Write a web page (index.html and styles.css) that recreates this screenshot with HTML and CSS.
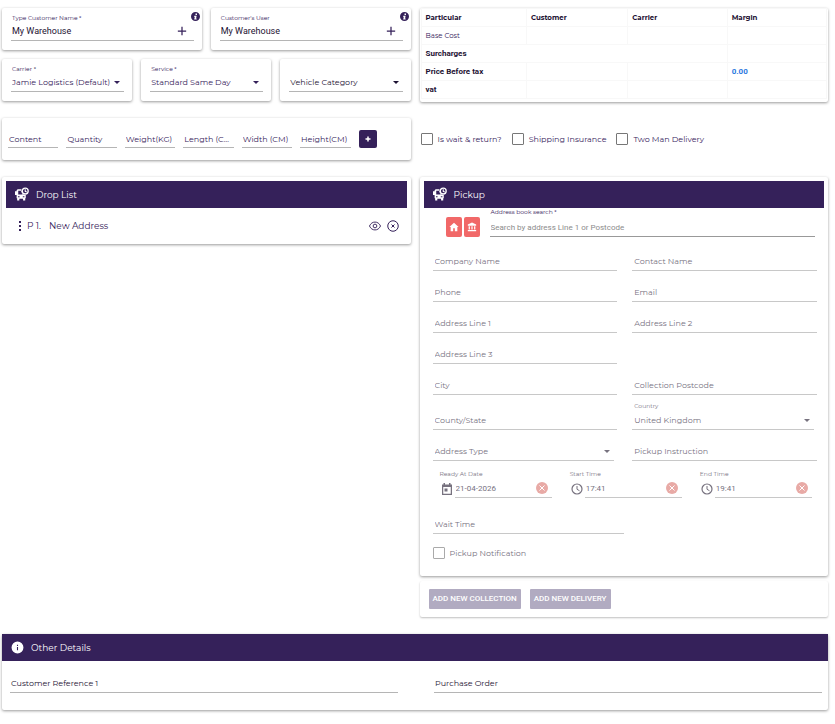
FILE: index.html
```html
<!DOCTYPE html>
<html lang="en">
<head>
    <meta charset="UTF-8">
    <meta name="viewport" content="width=device-width, initial-scale=1.0">
    <title>New Booking</title>
    <link rel="stylesheet" href="styles.css">
</head>
<body>
    <!-- shared icons -->
    <svg class="sprite" aria-hidden="true">
        <symbol id="icon-info" viewBox="0 0 24 24">
            <path fill="currentColor" fill-rule="evenodd" d="M12 0a12 12 0 1 0 0 24 12 12 0 0 0 0-24zM12 4h4v4h-4zM9 10h6l-1.500 7H15v3H8.500L10 13H8.500z"/>
        </symbol>
        <symbol id="icon-info-thin" viewBox="0 0 24 24">
            <path fill="currentColor" fill-rule="evenodd" d="M12 1a11 11 0 1 0 0 22 11 11 0 0 0 0-22zM11 7h2v2h-2zM11 11h2v6h-2z"/>
        </symbol>
        <symbol id="icon-plus" viewBox="0 0 24 24">
            <path fill="currentColor" d="M10.500 2h3v8.500H22v3h-8.500V22h-3v-8.500H2v-3h8.500z"/>
        </symbol>
        <symbol id="icon-plus-bold" viewBox="0 0 24 24">
            <path fill="currentColor" d="M9 2h6v7h7v6h-7v7H9v-7H2V9h7z"/>
        </symbol>
        <symbol id="icon-bus" viewBox="0 0 26 26">
            <path fill="currentColor" fill-rule="evenodd" d="M5 4h7a8 8 0 0 0 8 11v6h-1v4h-4v-3H8v3H4v-4H3v-6H0V8h3V6zM6 7v7h8V7zM5.500 17v2h3v-2zM14.500 17v2h3v-2z"/>
            <circle cx="19" cy="7.500" r="5.500" fill="none" stroke="currentColor" stroke-width="2.400"/>
            <path d="M19 4v4l3 1.500" fill="none" stroke="currentColor" stroke-width="2"/>
        </symbol>
        <symbol id="icon-clock" viewBox="0 0 24 24">
            <circle cx="12" cy="12" r="10" fill="none" stroke="currentColor" stroke-width="2.400"/>
            <path d="M12 6v6.500l5 3" fill="none" stroke="currentColor" stroke-width="2"/>
        </symbol>
        <symbol id="icon-cancel" viewBox="0 0 24 24">
            <circle cx="12" cy="12" r="12" fill="#e8aaa6"/>
            <path d="M7 7l10 10M17 7L7 17" stroke="#fff" stroke-width="2"/>
        </symbol>
    </svg>

    <main class="page">
        <div class="columns">
            <section class="filters">
                <div class="filter-row">
                    <div class="card filter">
                        <label for="customer-name">Type Customer Name *</label>
                        <div class="control">
                            <input class="roboto" type="text" id="customer-name" value="My Warehouse">
                            <button class="icon-button" aria-label="Add customer"><svg class="plus"><use href="#icon-plus"/></svg></button>
                        </div>
                        <svg class="info"><use href="#icon-info"/></svg>
                    </div>
                    <div class="card filter">
                        <label for="customer-user">Customer's User</label>
                        <div class="control">
                            <input class="roboto" type="text" id="customer-user" value="My Warehouse">
                            <button class="icon-button" aria-label="Add user"><svg class="plus"><use href="#icon-plus"/></svg></button>
                        </div>
                        <svg class="info"><use href="#icon-info"/></svg>
                    </div>
                </div>
                <div class="filter-row">
                    <div class="card filter">
                        <label for="carrier">Carrier *</label>
                        <div class="control select">
                            <select id="carrier"><option>Jamie Logistics (Default)</option></select>
                        </div>
                    </div>
                    <div class="card filter">
                        <label for="service">Service *</label>
                        <div class="control select">
                            <select id="service"><option>Standard Same Day</option></select>
                        </div>
                    </div>
                    <div class="card filter">
                        <div class="control select dark">
                            <select aria-label="Vehicle Category"><option>Vehicle Category</option></select>
                        </div>
                    </div>
                </div>
            </section>

            <section class="card prices">
                <table>
                    <thead>
                        <tr><th>Particular</th><th>Customer</th><th>Carrier</th><th>Margin</th></tr>
                    </thead>
                    <tbody>
                        <tr><td>Base Cost</td><td></td><td></td><td></td></tr>
                        <tr><th class="roboto" colspan="3">Surcharges</th><td></td></tr>
                        <tr><th class="roboto">Price Before tax</th><td></td><td></td><td class="roboto amount">0.00</td></tr>
                        <tr><th class="roboto">vat</th><td></td><td></td><td></td></tr>
                    </tbody>
                </table>
            </section>

            <section class="card parcel">
                <input type="text" aria-label="Content" placeholder="Content">
                <input type="text" aria-label="Quantity" placeholder="Quantity">
                <input type="text" aria-label="Weight(KG)" placeholder="Weight(KG)">
                <input type="text" aria-label="Length (CM)" placeholder="Length (CM)">
                <input type="text" aria-label="Width (CM)" placeholder="Width (CM)">
                <input type="text" aria-label="Height(CM)" placeholder="Height(CM)">
                <button class="add" aria-label="Add parcel"><svg><use href="#icon-plus-bold"/></svg></button>
            </section>

            <section class="options">
                <label><input type="checkbox"> Is wait &amp; return?</label>
                <label><input type="checkbox"> Shipping Insurance</label>
                <label><input type="checkbox"> Two Man Delivery</label>
            </section>

            <section class="card drops">
                <h2 class="bar"><svg class="bus"><use href="#icon-bus"/></svg>Drop List</h2>
                <div class="drop">
                    <svg class="grip" viewBox="0 0 2 10"><path d="M0 0h2v2H0zM0 4h2v2H0zM0 8h2v2H0z" fill="currentColor"/></svg>
                    <span>P 1.</span>
                    <span class="drop-name">New Address</span>
                    <button class="icon-button" aria-label="View">
                        <svg class="eye" viewBox="0 0 26 20" fill="none" stroke="currentColor" stroke-width="2"><path d="M1 10C4 4 8 1.500 13 1.500S22 4 25 10c-3 6-7 8.500-12 8.500S4 16 1 10z"/><circle cx="13" cy="10" r="4"/></svg>
                    </button>
                    <button class="icon-button" aria-label="Remove">
                        <svg class="remove" viewBox="0 0 24 24" fill="none" stroke="currentColor" stroke-width="2"><circle cx="12" cy="12" r="10.500"/><path d="M9 9l6 6M15 9l-6 6"/></svg>
                    </button>
                </div>
            </section>

            <div class="stop">
                <form class="card pickup">
                    <h2 class="bar"><svg class="bus"><use href="#icon-bus"/></svg>Pickup</h2>
                    <div class="search">
                        <button type="button" class="book" aria-label="Home address">
                            <svg viewBox="0 0 24 24"><path fill="currentColor" d="M12 2L1 12h3v10h6v-7h4v7h6V12h3z"/></svg>
                        </button>
                        <button type="button" class="book" aria-label="Business address">
                            <svg viewBox="0 0 24 24"><path fill="currentColor" d="M12 1L2 6v3h20V6zM4 10h3v8H4zM10.500 10h3v8h-3zM17 10h3v8h-3zM2 19h20v3H2z"/></svg>
                        </button>
                        <div class="search-field">
                            <label for="search">Address book search *</label>
                            <input class="roboto" type="text" id="search" placeholder="Search by address Line 1 or Postcode">
                        </div>
                    </div>
                    <div class="fields">
                        <input type="text" aria-label="Company Name" placeholder="Company Name">
                        <input type="text" aria-label="Contact Name" placeholder="Contact Name">
                        <input type="text" aria-label="Phone" placeholder="Phone">
                        <input type="text" aria-label="Email" placeholder="Email">
                        <input type="text" aria-label="Address Line 1" placeholder="Address Line 1">
                        <input type="text" aria-label="Address Line 2" placeholder="Address Line 2">
                        <input type="text" aria-label="Address Line 3" placeholder="Address Line 3">
                        <input class="first" type="text" aria-label="City" placeholder="City">
                        <input type="text" aria-label="Collection Postcode" placeholder="Collection Postcode">
                        <input type="text" aria-label="County/State" placeholder="County/State">
                        <div class="country">
                            <label for="country">Country</label>
                            <div class="control select">
                                <select id="country"><option>United Kingdom</option></select>
                            </div>
                        </div>
                        <div class="control select">
                            <select aria-label="Address Type"><option>Address Type</option></select>
                        </div>
                        <input type="text" aria-label="Pickup Instruction" placeholder="Pickup Instruction">
                    </div>
                    <div class="times">
                        <div class="time">
                            <label for="ready">Ready At Date</label>
                            <svg viewBox="0 0 24 24"><path fill="currentColor" fill-rule="evenodd" d="M5 0h3v3h8V0h3v3h3v21H2V3h3zM4.500 8v13.500h15V8zM7 11h6v6H7z"/></svg>
                            <div class="control">
                                <input class="roboto" type="text" id="ready" value="21-04-2026">
                                <button type="button" class="icon-button" aria-label="Clear date"><svg><use href="#icon-cancel"/></svg></button>
                            </div>
                        </div>
                        <div class="time">
                            <label for="start">Start Time</label>
                            <svg><use href="#icon-clock"/></svg>
                            <div class="control">
                                <input class="roboto" type="text" id="start" value="17:41">
                                <button type="button" class="icon-button" aria-label="Clear start time"><svg><use href="#icon-cancel"/></svg></button>
                            </div>
                        </div>
                        <div class="time">
                            <label for="end">End Time</label>
                            <svg><use href="#icon-clock"/></svg>
                            <div class="control">
                                <input class="roboto" type="text" id="end" value="19:41">
                                <button type="button" class="icon-button" aria-label="Clear end time"><svg><use href="#icon-cancel"/></svg></button>
                            </div>
                        </div>
                    </div>
                    <div class="wait">
                        <input type="text" aria-label="Wait Time" placeholder="Wait Time">
                    </div>
                    <label class="notify"><input type="checkbox"> Pickup Notification</label>
                </form>
                <div class="card actions">
                    <button>ADD NEW COLLECTION</button>
                    <button>ADD NEW DELIVERY</button>
                </div>
            </div>
        </div>

        <section class="card other">
            <h2 class="bar"><svg class="details"><use href="#icon-info-thin"/></svg>Other Details</h2>
            <div class="references">
                <input type="text" aria-label="Customer Reference 1" placeholder="Customer Reference 1">
                <input type="text" aria-label="Purchase Order" placeholder="Purchase Order">
            </div>
        </section>
    </main>
</body>
</html>
```

FILE: styles.css
```css
* {
    box-sizing: border-box;
}
body {
    margin: 0;
    background-color: #fff;
    color: #35215a;
    font-family: Montserrat, Inter, sans-serif;
    font-size: 8px;
    line-height: 12px;
}
.sprite {
    display: none;
}
svg {
    display: block;
}
input, select, button {
    min-width: 0;
    margin: 0;
    padding: 0;
    border: 0;
    background: none;
    color: inherit;
    font: inherit;
}
input[type="text"], select {
    width: 100%;
    height: 18px;
    outline: none;
}
input::placeholder {
    color: inherit;
    opacity: 1;
}
input:placeholder-shown {
    text-overflow: ellipsis;
}
select {
    appearance: none;
}
button {
    cursor: pointer;
}
.roboto {
    font-family: Roboto, sans-serif;
}
.page {
    padding: 8px 7px 12px 2px;
}
.columns {
    display: grid;
    grid-template-columns: 1fr 1fr;
    gap: 16px 9px;
    align-items: start;
}
.card {
    background-color: #fff;
    border-radius: 2px;
    box-shadow: 0 1px 3px rgba(0, 0, 0, 0.4);
}

/* underlined controls */
.control {
    display: flex;
    align-items: center;
    border-bottom: 1px solid #b5b5b5;
}
.select {
    display: grid;
}
.select select, .select::after {
    grid-area: 1 / 1;
}
.select::after {
    content: "";
    justify-self: end;
    margin-right: 4px;
    border: 3px solid transparent;
    border-top-color: currentColor;
    border-bottom: 0;
    pointer-events: none;
}
.icon-button {
    flex: none;
}

/* customer, carrier and service */
.filters {
    display: grid;
    gap: 9px;
}
.filter-row {
    display: grid;
    grid-auto-flow: column;
    grid-auto-columns: 1fr;
    gap: 9px;
}
.filter {
    position: relative;
    display: flex;
    flex-direction: column;
    justify-content: flex-end;
    height: 42px;
    padding: 0 8px 9px 9px;
}
.filter label, .search label, .country label, .time label {
    padding-left: 1px;
    font-size: 6px;
    line-height: 8px;
}
.filter input, .filter select {
    padding-left: 1px;
}
.filter .roboto {
    color: #1d1233;
    font-size: 9px;
}
.filter .dark {
    color: #1d1233;
}
.plus {
    width: 10px;
    height: 10px;
    margin-right: 7px;
}
.info {
    position: absolute;
    top: 4px;
    right: 2px;
    width: 9px;
    height: 9px;
}

/* price table */
.prices {
    height: 94px;
    padding: 0 1px;
}
table {
    width: 100%;
    table-layout: fixed;
    border-collapse: collapse;
    font-size: 7px;
}
th, td {
    height: 18px;
    padding: 0 4px;
    border: 1px solid #f8f8f8;
    text-align: left;
}
th {
    color: #1d1233;
    font-weight: 700;
}
th:first-child {
    width: 26%;
}
th:nth-child(2) {
    width: 25%;
}
table .roboto {
    font-size: 8px;
}
.amount {
    color: #2b78e0;
    font-weight: 700;
}

/* parcel line */
.parcel {
    display: flex;
    align-items: flex-end;
    gap: 8px;
    height: 42px;
    padding: 0 34px 12px 6px;
}
.parcel input {
    flex: 1;
    padding-left: 1px;
    border-bottom: 1px solid #b5b5b5;
}
.add {
    display: grid;
    place-items: center;
    width: 18px;
    height: 18px;
    border-radius: 2px;
    background-color: #35215a;
    color: #fff;
}
.add svg {
    width: 6px;
    height: 6px;
}

/* check boxes */
.options {
    display: flex;
    align-items: center;
    gap: 10px;
    height: 42px;
    margin-bottom: 1px;
    padding-left: 1px;
}
.options label, .notify {
    display: flex;
    align-items: center;
    gap: 5px;
}
input[type="checkbox"] {
    appearance: none;
    width: 12px;
    height: 12px;
    border: 1px solid #777;
    border-radius: 1px;
}

/* panels */
.bar {
    display: flex;
    align-items: center;
    gap: 7px;
    height: 27px;
    margin: 0;
    padding-left: 9px;
    background-color: #35215a;
    color: #fff;
    font-size: 9px;
    font-weight: 400;
}
.bus {
    width: 14px;
    height: 14px;
    margin-bottom: 2px;
}
.details {
    width: 13px;
    height: 13px;
}
.drops {
    padding: 4px 4px 0;
}
.drop {
    display: flex;
    align-items: center;
    gap: 6px;
    height: 36px;
    padding: 0 8px 0 13px;
    font-size: 9px;
}
.grip {
    width: 2px;
    height: 10px;
}
.drop-name {
    flex: 1;
    padding-left: 2px;
}
.eye {
    width: 12px;
    height: 10px;
}
.remove {
    width: 12px;
    height: 12px;
}

/* pickup form */
.stop {
    display: grid;
    gap: 5px;
}
.pickup {
    padding: 4px 4px 17px;
    color: #77727f;
}
.search {
    display: flex;
    align-items: flex-end;
    gap: 2px;
    padding: 0 9px 0 22px;
}
.book {
    display: grid;
    place-items: center;
    width: 16px;
    height: 20px;
    border-radius: 2px;
    background-color: #f16868;
    color: #fff;
}
.book svg {
    width: 10px;
    height: 10px;
}
.search-field {
    display: grid;
    flex: 1;
    padding-left: 8px;
}
.search-field label {
    height: 10px;
    color: #35215a;
}
.search-field input {
    height: 19px;
    padding-left: 1px;
    border-bottom: 1px solid #999;
    color: #8c8c8c;
}
.fields {
    display: grid;
    grid-template-columns: 1fr 1fr;
    gap: 12px 15px;
    align-items: end;
    margin: 15px 7px 0 9px;
}
.fields input, .wait input {
    height: 19px;
    padding-left: 2px;
    border-bottom: 1px solid #c8c8c8;
}
.fields .first {
    grid-column: 1;
}
.fields select {
    padding-left: 2px;
}
.fields .control {
    margin-right: 3px;
    border-color: #c8c8c8;
}
.country {
    display: grid;
    margin-top: -5px;
}
.country label {
    height: 9px;
    padding-left: 2px;
}
.times {
    display: grid;
    grid-template-columns: repeat(3, 1fr);
    gap: 17px;
    margin: 9px 12px 0 15px;
}
.time {
    display: grid;
    grid-template-columns: 12px 1fr;
    align-items: center;
    column-gap: 4px;
}
.time label {
    grid-column: 1 / -1;
    height: 9px;
}
.time > svg {
    width: 12px;
    height: 12px;
    margin-left: 2px;
}
.time .control {
    border-color: #c8c8c8;
}
.time input {
    padding-left: 1px;
}
.time button svg {
    width: 12px;
    height: 12px;
    margin-right: 4px;
}
.wait {
    width: 50%;
    margin-top: 17px;
    padding-left: 9px;
}
.notify {
    margin: 13px 0 0 9px;
}
.notify input {
    border-color: #aaa;
}
.actions {
    display: flex;
    gap: 9px;
    padding: 8px 9px;
    box-shadow: 0 1px 2px rgba(0, 0, 0, 0.25);
}
.actions button {
    height: 20px;
    padding: 0 4px;
    border-radius: 1px;
    background-color: #b1abc1;
    color: #fff;
    font-family: Roboto, sans-serif;
    font-weight: 500;
}

/* other details */
.other {
    margin-top: 17px;
}
.references {
    display: grid;
    grid-template-columns: 1fr 1fr;
    gap: 36px;
    padding: 13px 6px 17px 8px;
}
.references input {
    height: 19px;
    padding-left: 1px;
    border-bottom: 1px solid #b5b5b5;
    color: #1d1233;
}
```
